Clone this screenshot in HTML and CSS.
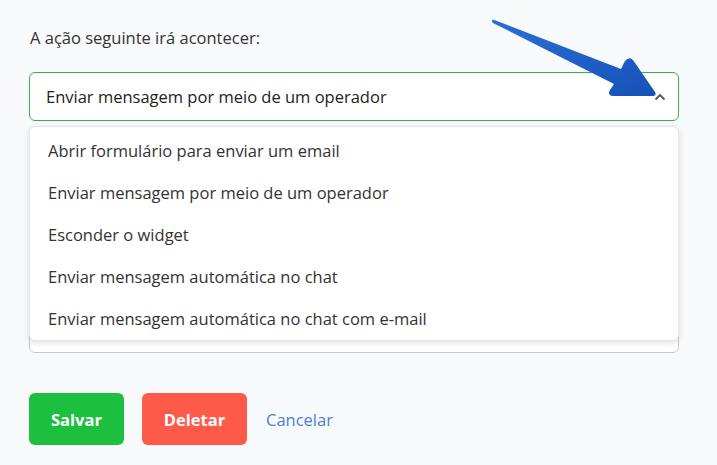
FILE: index.html
```html
<!DOCTYPE html>
<html lang="pt">
<head>
<meta charset="utf-8">
<link rel="stylesheet" href="styles.css">
</head>
<body>
<div class="page">
  <label class="label">A ação seguinte irá acontecer:</label>
  <div class="field">
    <div class="select">
      <span>Enviar mensagem por meio de um operador</span>
      <svg class="chev" width="12" height="8" viewBox="0 0 12 8"><path d="M1.5 6.5 L6 2 L10.5 6.5" fill="none" stroke="#555" stroke-width="1.8"/></svg>
    </div>
    <div class="textarea"></div>
    <ul class="menu">
      <li>Abrir formulário para enviar um email</li>
      <li>Enviar mensagem por meio de um operador</li>
      <li>Esconder o widget</li>
      <li>Enviar mensagem automática no chat</li>
      <li>Enviar mensagem automática no chat com e-mail</li>
    </ul>
  </div>
  <div class="actions">
    <button class="btn save">Salvar</button>
    <button class="btn del">Deletar</button>
    <a class="cancel" href="#">Cancelar</a>
  </div>
  <svg class="arrow" width="717" height="465" viewBox="0 0 717 465">
    <defs>
      <linearGradient id="g" x1="0" y1="0" x2="1" y2="1">
        <stop offset="0" stop-color="#2a6fd6"/>
        <stop offset="1" stop-color="#1652b8"/>
      </linearGradient>
    </defs>
    <path d="M493,19.5 L621,69 L625,61 Q629,56 633,60 L655,92 Q657,96 652,96 L613,96 Q607,95 610,90 L614,84 L493,23 Q491,21 493,19.5 Z" fill="url(#g)"/>
  </svg>
</div>
</body>
</html>
```
FILE: styles.css
```css
html, body { margin: 0; padding: 0; }
body {
  background: #f8f9fb;
  font-family: "Open Sans", "Noto Sans", sans-serif;
  color: #2b2b2b;
  width: 717px;
  height: 465px;
  overflow: hidden;
}
.page {
  position: relative;
  padding: 26px 38px 0 29px;
  display: flex;
  flex-direction: column;
}
.label {
  font-size: 16.5px;
  line-height: 24px;
  padding-left: 1px;
  color: #333;
}
.field {
  position: relative;
  margin-top: 22px;
}
.select {
  height: 47px;
  border: 1px solid #34b54c;
  border-radius: 6px;
  background: #fff;
  display: flex;
  align-items: center;
  justify-content: space-between;
  padding: 0 12px 0 16px;
  font-size: 16.5px;
  color: #222;
}
.chev { margin-top: 0; }
.textarea {
  margin-top: 18px;
  height: 212px;
  border: 1px solid #c8c8c8;
  border-radius: 6px;
  background: #fff;
}
.menu {
  position: absolute;
  top: 54px;
  left: 0;
  right: 0;
  margin: 0;
  padding: 3px 0 0;
  list-style: none;
  background: #fff;
  border: 1px solid #e6e6e6;
  border-radius: 6px;
  box-shadow: 0 2px 6px rgba(0,0,0,0.12);
}
.menu li {
  padding: 0 18px;
  height: 42px;
  line-height: 42px;
  font-size: 16.5px;
  color: #333;
}
.actions {
  margin-top: 40px;
  display: flex;
  align-items: center;
  gap: 18px;
}
.btn {
  border: none;
  border-radius: 6px;
  height: 52px;
  color: #fff;
  font-family: inherit;
  font-size: 16.5px;
  font-weight: 700;
  cursor: pointer;
}
.save { background: #1dbf3e; width: 95px; }
.del { background: #fd5a4a; width: 105px; }
.cancel {
  color: #4a7fd6;
  text-decoration: none;
  font-size: 16.5px;
  margin-left: 1px;
}
.arrow {
  position: absolute;
  left: 0;
  top: 0;
  pointer-events: none;
}
```
